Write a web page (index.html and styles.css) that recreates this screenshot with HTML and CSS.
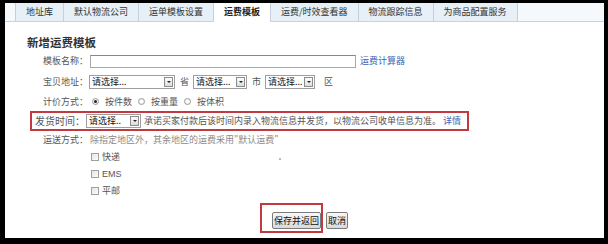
FILE: index.html
```html
<!DOCTYPE html>
<html lang="zh-CN">
<head>
<meta charset="utf-8">
<title>新增运费模板</title>
<link rel="stylesheet" href="styles.css">
</head>
<body>
<div class="frame">
  <div class="tabs">
    <span class="tab">地址库</span>
    <span class="tab">默认物流公司</span>
    <span class="tab">运单模板设置</span>
    <span class="tab active">运费模板</span>
    <span class="tab">运费/时效查看器</span>
    <span class="tab">物流跟踪信息</span>
    <span class="tab">为商品配置服务</span>
  </div>

  <h2 class="title">新增运费模板</h2>

  <div class="form">
    <div class="row row-name">
      <span class="label">模板名称：</span>
      <span class="text-input"></span>
      <a class="link calc">运费计算器</a>
    </div>

    <div class="row row-addr">
      <span class="label">宝贝地址：</span>
      <span class="sel sel-prov"><span class="sel-text">请选择...</span><span class="sel-btn"></span></span>
      <span class="unit">省</span>
      <span class="sel sel-city"><span class="sel-text">请选择...</span><span class="sel-btn"></span></span>
      <span class="unit">市</span>
      <span class="sel sel-dist"><span class="sel-text">请选择...</span><span class="sel-btn"></span></span>
      <span class="unit unit-last">区</span>
    </div>

    <div class="row row-price">
      <span class="label">计价方式：</span>
      <span class="radio checked"></span><span class="opt">按件数</span>
      <span class="radio"></span><span class="opt">按重量</span>
      <span class="radio"></span><span class="opt">按体积</span>
    </div>

    <div class="row row-ship">
      <div class="highlight">
        <span class="label label-hl">发货时间：</span>
        <span class="sel sel-time"><span class="sel-text">请选择..</span><span class="sel-btn"></span></span>
        <span class="note">承诺买家付款后该时间内录入物流信息并发货，以物流公司收单信息为准。</span>
        <a class="link">详情</a>
      </div>
    </div>

    <div class="row row-mode">
      <span class="label">运送方式：</span>
      <span class="hint">除指定地区外，其余地区的运费采用"默认运费"</span>
    </div>

    <div class="row row-check">
      <span class="checkbox"></span><span class="opt">快递</span>
      <span class="speck"></span>
    </div>
    <div class="row row-check">
      <span class="checkbox"></span><span class="opt opt-latin">EMS</span>
    </div>
    <div class="row row-check">
      <span class="checkbox"></span><span class="opt">平邮</span>
    </div>

    <div class="actions">
      <span class="highlight-btn"><button class="btn">保存并返回</button></span>
      <button class="btn btn-cancel">取消</button>
    </div>
  </div>
</div>
</body>
</html>
```

FILE: styles.css
```css
html, body {
  margin: 0;
  padding: 0;
}

body {
  width: 608px;
  height: 244px;
  overflow: hidden;
  background: #000;
  font-family: "Noto Sans CJK SC", "Noto Sans", sans-serif;
  font-size: 9px;
  color: #555;
}

.frame {
  margin: 3px 4px 0 5px;
  height: 235px;
  background: #fff;
  overflow: hidden;
}

/* tabs */
.tabs {
  display: flex;
  height: 18px;
  padding-left: 10px;
  border-bottom: 1px solid #c9d2da;
  background: #f6f9fc;
}

.tab {
  padding: 0 10px;
  line-height: 18px;
  font-size: 9px;
  color: #333;
  background: #e7eff7;
  border-left: 1px solid #c4d0dc;
}

.tab:last-child {
  border-right: 1px solid #c4d0dc;
}

.tab.active {
  background: #fff;
  font-weight: bold;
  color: #222;
  height: 19px;
  margin-bottom: -1px;
}

/* title */
.title {
  margin: 13px 0 0 22px;
  font-size: 11.5px;
  line-height: 15px;
  font-weight: bold;
  color: #333;
}

/* form */
.form {
  margin-top: 1px;
}

.row {
  display: flex;
  align-items: center;
  height: 20px;
}

.row-addr {
  height: 21px;
}

.row-price {
  height: 19px;
}

.row-ship {
  height: 20px;
}

.row-mode {
  height: 17px;
}

.row-check {
  height: 17px;
  padding-left: 86px;
}

.label {
  width: 83px;
  flex: none;
  text-align: right;
  line-height: 12px;
  color: #555;
}

.text-input {
  width: 266px;
  height: 13px;
  margin-left: 2px;
  box-sizing: border-box;
  border: 1px solid #a9a9a9;
  border-top-color: #888;
  background: #fff;
}

.link {
  color: #3a66b5;
  line-height: 12px;
}

.calc {
  margin-left: 4px;
}

/* selects */
.sel {
  display: inline-flex;
  align-items: center;
  height: 14px;
  box-sizing: border-box;
  border: 1px solid #9e9e9e;
  background: #fff;
  flex: none;
}

.row-addr .sel-prov {
  margin-left: 1px;
}

.sel-prov {
  width: 86px;
}

.sel-city {
  width: 54px;
}

.sel-dist {
  width: 50px;
}

.sel-time {
  width: 55px;
}

.sel-text {
  flex: 1;
  padding-left: 2px;
  font-size: 9px;
  line-height: 12px;
  color: #111;
  white-space: nowrap;
}

.sel-btn {
  position: relative;
  width: 9px;
  height: 10px;
  margin-right: 1px;
  box-sizing: border-box;
  border: 1px solid #8c8c8c;
  background: linear-gradient(#fdfdfd, #dcdcdc);
  flex: none;
}

.sel-btn::after {
  content: "";
  position: absolute;
  left: 2px;
  top: 3px;
  border-left: 2px solid transparent;
  border-right: 2px solid transparent;
  border-top: 2px solid #222;
}

.unit {
  margin: 0 4px 0 5px;
  line-height: 12px;
  color: #555;
}

.unit-last {
  margin-left: 9px;
}

/* radios */
.radio {
  width: 7px;
  height: 7px;
  box-sizing: border-box;
  border-radius: 50%;
  border: 1px solid #9a9a9a;
  background: radial-gradient(circle, #fff 30%, #e2e2e2 100%);
  margin: 0 6px 0 4px;
  flex: none;
  position: relative;
}

.radio.checked::after {
  content: "";
  position: absolute;
  left: 1px;
  top: 1px;
  width: 3px;
  height: 3px;
  border-radius: 50%;
  background: #222;
}

.opt {
  line-height: 12px;
  color: #555;
  margin-right: 2px;
}

.opt-latin {
  font-family: "Liberation Sans", sans-serif;
  font-size: 9px;
}

/* highlighted row */
.highlight {
  display: inline-flex;
  align-items: center;
  height: 20px;
  box-sizing: border-box;
  margin-left: 25px;
  padding-right: 6px;
  border: 2px solid #c23a3f;
}

.label-hl {
  width: 53px;
  font-size: 10px;
  margin-right: 1px;
}

.note {
  margin: 0 2px 0 3px;
  line-height: 12px;
  color: #555;
  white-space: nowrap;
}

.hint {
  margin-left: 2px;
  line-height: 12px;
  color: #8a8a8a;
}

/* checkboxes */
.checkbox {
  width: 8px;
  height: 8px;
  box-sizing: border-box;
  border: 1px solid #a0a0a0;
  background: linear-gradient(135deg, #e6e6e6, #fbfbfb);
  margin-right: 3px;
  flex: none;
}

.speck {
  width: 2px;
  height: 2px;
  margin-left: 157px;
  margin-top: 4px;
  background: #bbb;
}

/* actions */
.actions {
  display: flex;
  align-items: flex-end;
  margin: 4px 0 0 255px;
}

.highlight-btn {
  display: inline-flex;
  padding: 7px 0 2px 10px;
  border: 2px solid #c23a3f;
}

.btn {
  height: 17px;
  padding: 0 1px;
  margin: 0;
  font-family: "Noto Sans CJK SC", sans-serif;
  font-size: 9px;
  line-height: 13px;
  color: #111;
  border: 1px solid #7b7b7b;
  border-radius: 2px;
  background: linear-gradient(#f7f7f7, #dadada);
}

.btn-cancel {
  margin: 0 0 4px 3px;
}
```
